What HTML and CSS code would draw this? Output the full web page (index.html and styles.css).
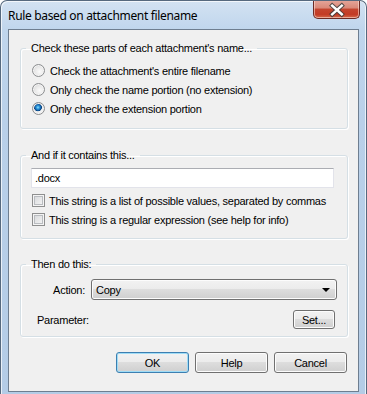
FILE: index.html
```html
<!DOCTYPE html>
<html>
<head>
<meta charset="utf-8">
<title>Rule based on attachment filename</title>
<link rel="stylesheet" href="styles.css">
</head>
<body>
<div class="window">
  <div class="titlebar">
    <span class="title">Rule based on attachment filename</span>
    <div class="close">
      <svg width="47" height="19" viewBox="0 0 47 19">
        <path d="M19 5.5 L29 14.5 M29 5.5 L19 14.5" stroke="#3b3b3b" stroke-width="4.6" stroke-linecap="square" fill="none" opacity="0.85"/>
        <path d="M19 5.5 L29 14.5 M29 5.5 L19 14.5" stroke="#ffffff" stroke-width="2.6" stroke-linecap="square" fill="none"/>
      </svg>
    </div>
  </div>
  <div class="client">
    <fieldset class="group g1">
      <legend>Check these parts of each attachment's name...</legend>
      <label class="row"><span class="radio"></span>Check the attachment's entire filename</label>
      <label class="row"><span class="radio"></span>Only check the name portion (no extension)</label>
      <label class="row"><span class="radio on"></span>Only check the extension portion</label>
    </fieldset>
    <fieldset class="group g2">
      <legend>And if it contains this...</legend>
      <div class="textbox">.docx</div>
      <label class="row crow"><span class="check"></span>This string is a list of possible values, separated by commas</label>
      <label class="row crow"><span class="check"></span>This string is a regular expression (see help for info)</label>
    </fieldset>
    <fieldset class="group g3">
      <legend>Then do this:</legend>
      <div class="action-row">
        <span class="action-label">Action:</span>
        <div class="combo"><span>Copy</span><span class="arrow"></span></div>
      </div>
      <div class="param-row">
        <span class="param-label">Parameter:</span>
        <button class="btn set">Set...</button>
      </div>
    </fieldset>
    <div class="buttons">
      <button class="btn default">OK</button>
      <button class="btn">Help</button>
      <button class="btn">Cancel</button>
    </div>
  </div>
</div>
</body>
</html>
```

FILE: styles.css
```css
* { box-sizing: border-box; }

body {
  margin: 0;
  font-family: "Liberation Sans", Arial, sans-serif;
  font-size: 11px;
  letter-spacing: -0.25px;
  color: #000;
  background: #fff;
}

.window {
  width: 367px;
  height: 394px;
  border: 1px solid #56697e;
  border-bottom: none;
  border-radius: 7px 7px 0 0;
  background: linear-gradient(180deg, #d3e2f2 0, #c0d6ed 28px, #b9d0e9 120px, #b4cce6 100%);
  box-shadow: inset 1px 1px 0 rgba(255,255,255,0.7), inset -1px 0 0 rgba(255,255,255,0.7);
  display: flex;
  flex-direction: column;
  overflow: hidden;
}

.titlebar {
  height: 28px;
  display: flex;
  justify-content: space-between;
  align-items: flex-start;
  flex: none;
}

.title {
  font-family: "Noto Sans", "Open Sans", sans-serif;
  font-size: 12px;
  line-height: 16px;
  margin: 7px 0 0 7px;
  color: #000;
  letter-spacing: -0.33px;
}

.close {
  width: 47px;
  height: 19px;
  margin: -1px 6px 0 0;
  border: 1px solid #6c2b25;
  border-top: none;
  border-radius: 0 0 5px 5px;
  background: linear-gradient(180deg, #e5a79b 0, #d98878 45%, #c4452f 50%, #c33b25 80%, #d46a4c 100%);
  box-shadow: inset 0 0 0 1px rgba(255,230,220,0.55);
  display: flex;
}

.client {
  margin: 0 0 0 7px;
  width: 351px;
  height: 363px;
  border: 1px solid #6e7e90;
  background: #f0f0f0;
  display: flex;
  flex-direction: column;
}

.group {
  margin: 0 10px 0 11px;
  border: 1px solid #d5dfe5;
  border-radius: 3px;
  padding: 6px 0 10px 5px;
  box-shadow: inset 1px 1px 0 #fff, 1px 1px 0 #fff;
  min-width: 0;
}

.group legend {
  padding: 0 5px;
  line-height: 13px;
  font-size: 11px;
}

.g1 { margin-top: 12px; }
.g2 { margin-top: 20px; padding-bottom: 9px; }
.g3 { margin-top: 19px; padding-top: 8px; padding-bottom: 7px; }

.row {
  display: flex;
  align-items: center;
  height: 19px;
  padding-left: 6px;
  white-space: nowrap;
}

.radio {
  width: 13px;
  height: 13px;
  border-radius: 50%;
  border: 1px solid #8c8e90;
  margin-right: 5px;
  flex: none;
  background: radial-gradient(circle at 60% 60%, #fbfbfb 0, #eaeaea 45%, #cdcdcd 100%);
  box-shadow: inset 0 0 0 1px #f4f4f4;
}

.radio.on {
  background:
    radial-gradient(circle at 45% 40%, #8fe3fb 0, #2e97dc 1.6px, #0f5ea7 3px, #0b3f77 3.6px, rgba(11,63,119,0) 4.2px),
    radial-gradient(circle at 60% 60%, #fbfbfb 0, #eaeaea 45%, #cdcdcd 100%);
}

.textbox {
  margin: 0 0 3px 5px;
  width: 303px;
  height: 20px;
  background: #fff;
  border: 1px solid #e2e3ea;
  border-top-color: #abadb3;
  padding: 0 3px;
  line-height: 18px;
}

.crow { padding-left: 6px; }

.check {
  width: 13px;
  height: 13px;
  border: 1px solid #8e8f8f;
  margin-right: 4px;
  flex: none;
  background: linear-gradient(135deg, #d2d4d7 0, #e6e7e8 50%, #f7f7f7 100%);
  box-shadow: inset 0 0 0 1px #f4f4f4, inset 0 0 0 2px #b9bcc0;
}

.action-row {
  display: flex;
  align-items: center;
  height: 21px;
}

.action-label {
  width: 59px;
  text-align: right;
  margin-right: 6px;
}

.combo {
  width: 246px;
  height: 21px;
  border: 1px solid #707070;
  border-radius: 3px;
  background: linear-gradient(180deg, #f2f2f2 0, #ebebeb 50%, #dddddd 50%, #cfcfcf 100%);
  box-shadow: inset 0 0 0 1px #fcfcfc;
  display: flex;
  align-items: center;
  justify-content: space-between;
  padding: 0 5px 0 4px;
  font-size: 11px;
}

.arrow {
  width: 0;
  height: 0;
  border-left: 4px solid transparent;
  border-right: 4px solid transparent;
  border-top: 4px solid #000;
  margin-right: 1px;
}

.param-row {
  display: flex;
  align-items: center;
  height: 19px;
  margin-top: 10px;
}

.param-label {
  margin-left: 11px;
  width: 256px;
}

.btn {
  font-family: "Liberation Sans", Arial, sans-serif;
  font-size: 11px;
  letter-spacing: -0.25px;
  color: #000;
  height: 21px;
  width: 73px;
  border: 1px solid #707070;
  border-radius: 3px;
  background: linear-gradient(180deg, #f2f2f2 0, #ebebeb 50%, #dddddd 50%, #cfcfcf 100%);
  box-shadow: inset 0 0 0 1px #fcfcfc;
  padding: 0;
}

.btn.set {
  width: 42px;
  height: 19px;
}

.btn.default {
  border-color: #3c7fb1;
  box-shadow: inset 0 0 0 1px #9fdcf6;
}

.buttons {
  display: flex;
  justify-content: flex-end;
  gap: 6px;
  margin-top: 15px;
  padding-right: 11px;
}
```
